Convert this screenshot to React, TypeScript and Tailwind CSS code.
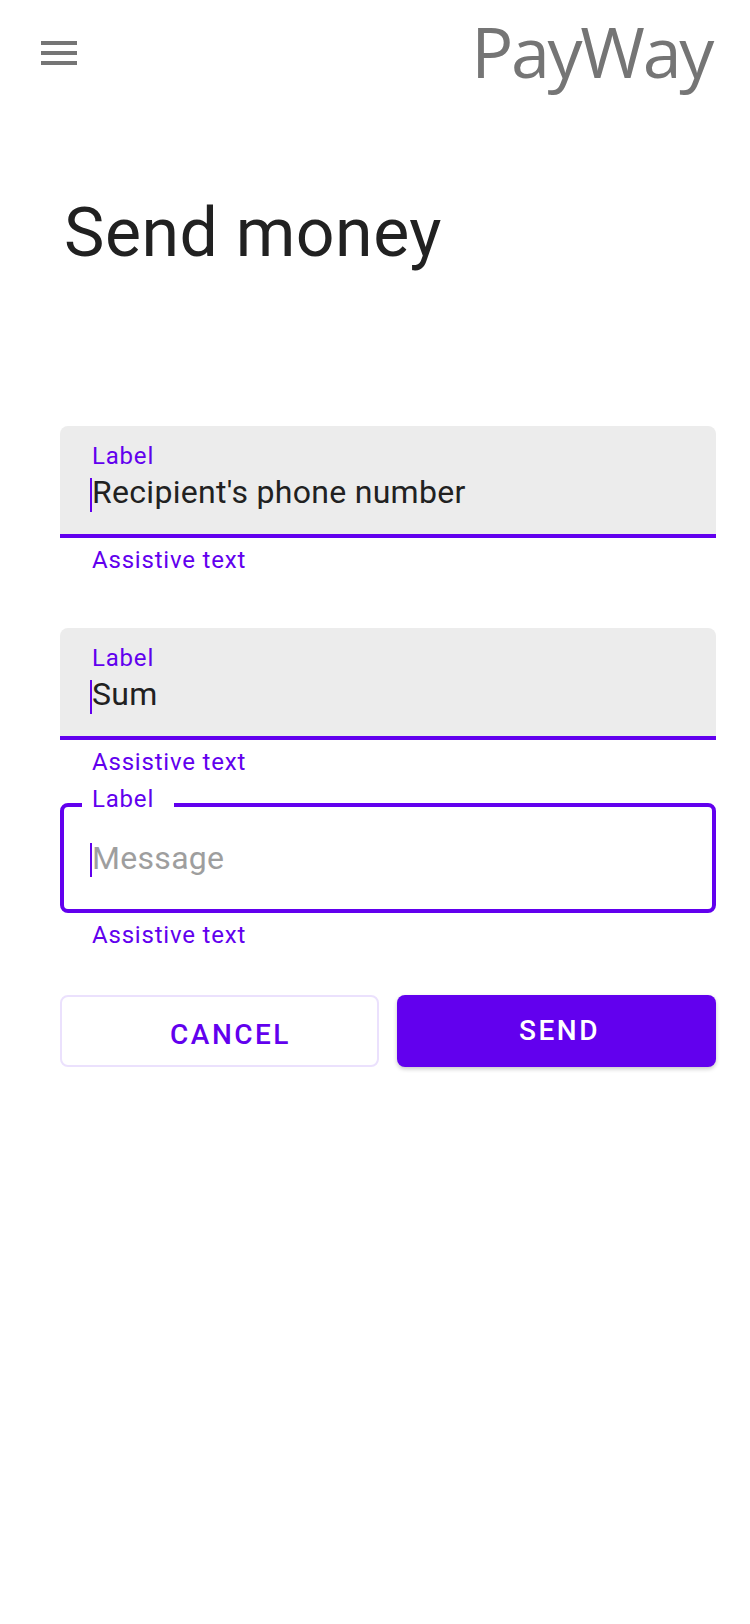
import React from "react";

function Cursor({ top = "top-[2px]" }: { top?: string }) {
  return <span className={`absolute left-[-2px] ${top} h-[34px] w-[2px] bg-[#6200ee]`} />;
}

function Helper() {
  return (
    <div className="pl-[32px] pt-[6px] text-[24px] leading-[32px] tracking-[0.8px] text-[#6200ee]">
      Assistive text
    </div>
  );
}

function FilledField({ label, value }: { label: string; value: string }) {
  return (
    <div>
      <div className="h-[112px] rounded-t-[8px] bg-[#ececec] border-b-4 border-[#6200ee] px-[32px] pt-[18px]">
        <div className="text-[24px] leading-[24px] tracking-[0.8px] text-[#6200ee]">{label}</div>
        <div className="relative mt-[8px] text-[32px] leading-[32px] tracking-[0.3px] text-[#212121]">
          <Cursor />
          {value}
        </div>
      </div>
      <Helper />
    </div>
  );
}

function OutlinedField({ label, placeholder }: { label: string; placeholder: string }) {
  return (
    <div>
      <div className="relative flex h-[110px] items-center rounded-[8px] border-4 border-[#6200ee] px-[28px]">
        <span className="absolute left-[18px] top-[-20px] bg-white pl-[10px] pr-[20px] text-[24px] leading-[24px] tracking-[0.8px] text-[#6200ee]">
          {label}
        </span>
        <div className="relative text-[32px] leading-[32px] tracking-[0.3px] text-[#9e9e9e]">
          <Cursor top="top-[1px]" />
          {placeholder}
        </div>
      </div>
      <Helper />
    </div>
  );
}

export default function App() {
  return (
    <div className="min-h-[1624px] w-[750px] bg-white font-['Roboto',sans-serif]">
      <header className="flex items-start justify-between">
        <button className="ml-[41px] mt-[41px] flex flex-col gap-[6px]" aria-label="menu">
          <span className="h-[4px] w-[36px] bg-[#757575]" />
          <span className="h-[4px] w-[36px] bg-[#757575]" />
          <span className="h-[4px] w-[36px] bg-[#757575]" />
        </button>
        <div className="mr-[38px] mt-[16px] font-['Open_Sans',sans-serif] text-[70px] leading-[70px] tracking-[-2.3px] text-[#757575]">
          PayWay
        </div>
      </header>

      <h1 className="ml-[64px] mt-[113px] text-[68px] leading-[68px] tracking-[0.5px] text-[#212121]">
        Send money
      </h1>

      <div className="mt-[159px] pl-[60px] pr-[34px]">
        <FilledField label="Label" value="Recipient's phone number" />
        <div className="mt-[52px]">
          <FilledField label="Label" value="Sum" />
        </div>
        <div className="mt-[25px]">
          <OutlinedField label="Label" placeholder="Message" />
        </div>

        <div className="mt-[44px] flex gap-[18px]">
          <button className="flex h-[72px] w-[319px] items-center justify-center rounded-[8px] border-2 border-[#ebe1fd] pl-[22px] pt-[8px] text-[28px] font-medium tracking-[2.5px] text-[#6200ee]">
            CANCEL
          </button>
          <button className="flex h-[72px] w-[319px] items-center justify-center rounded-[8px] bg-[#6200ee] pl-[6px] text-[28px] font-medium tracking-[2.5px] text-white shadow-[0_2px_4px_rgba(0,0,0,0.22)]">
            SEND
          </button>
        </div>
      </div>
    </div>
  );
}
